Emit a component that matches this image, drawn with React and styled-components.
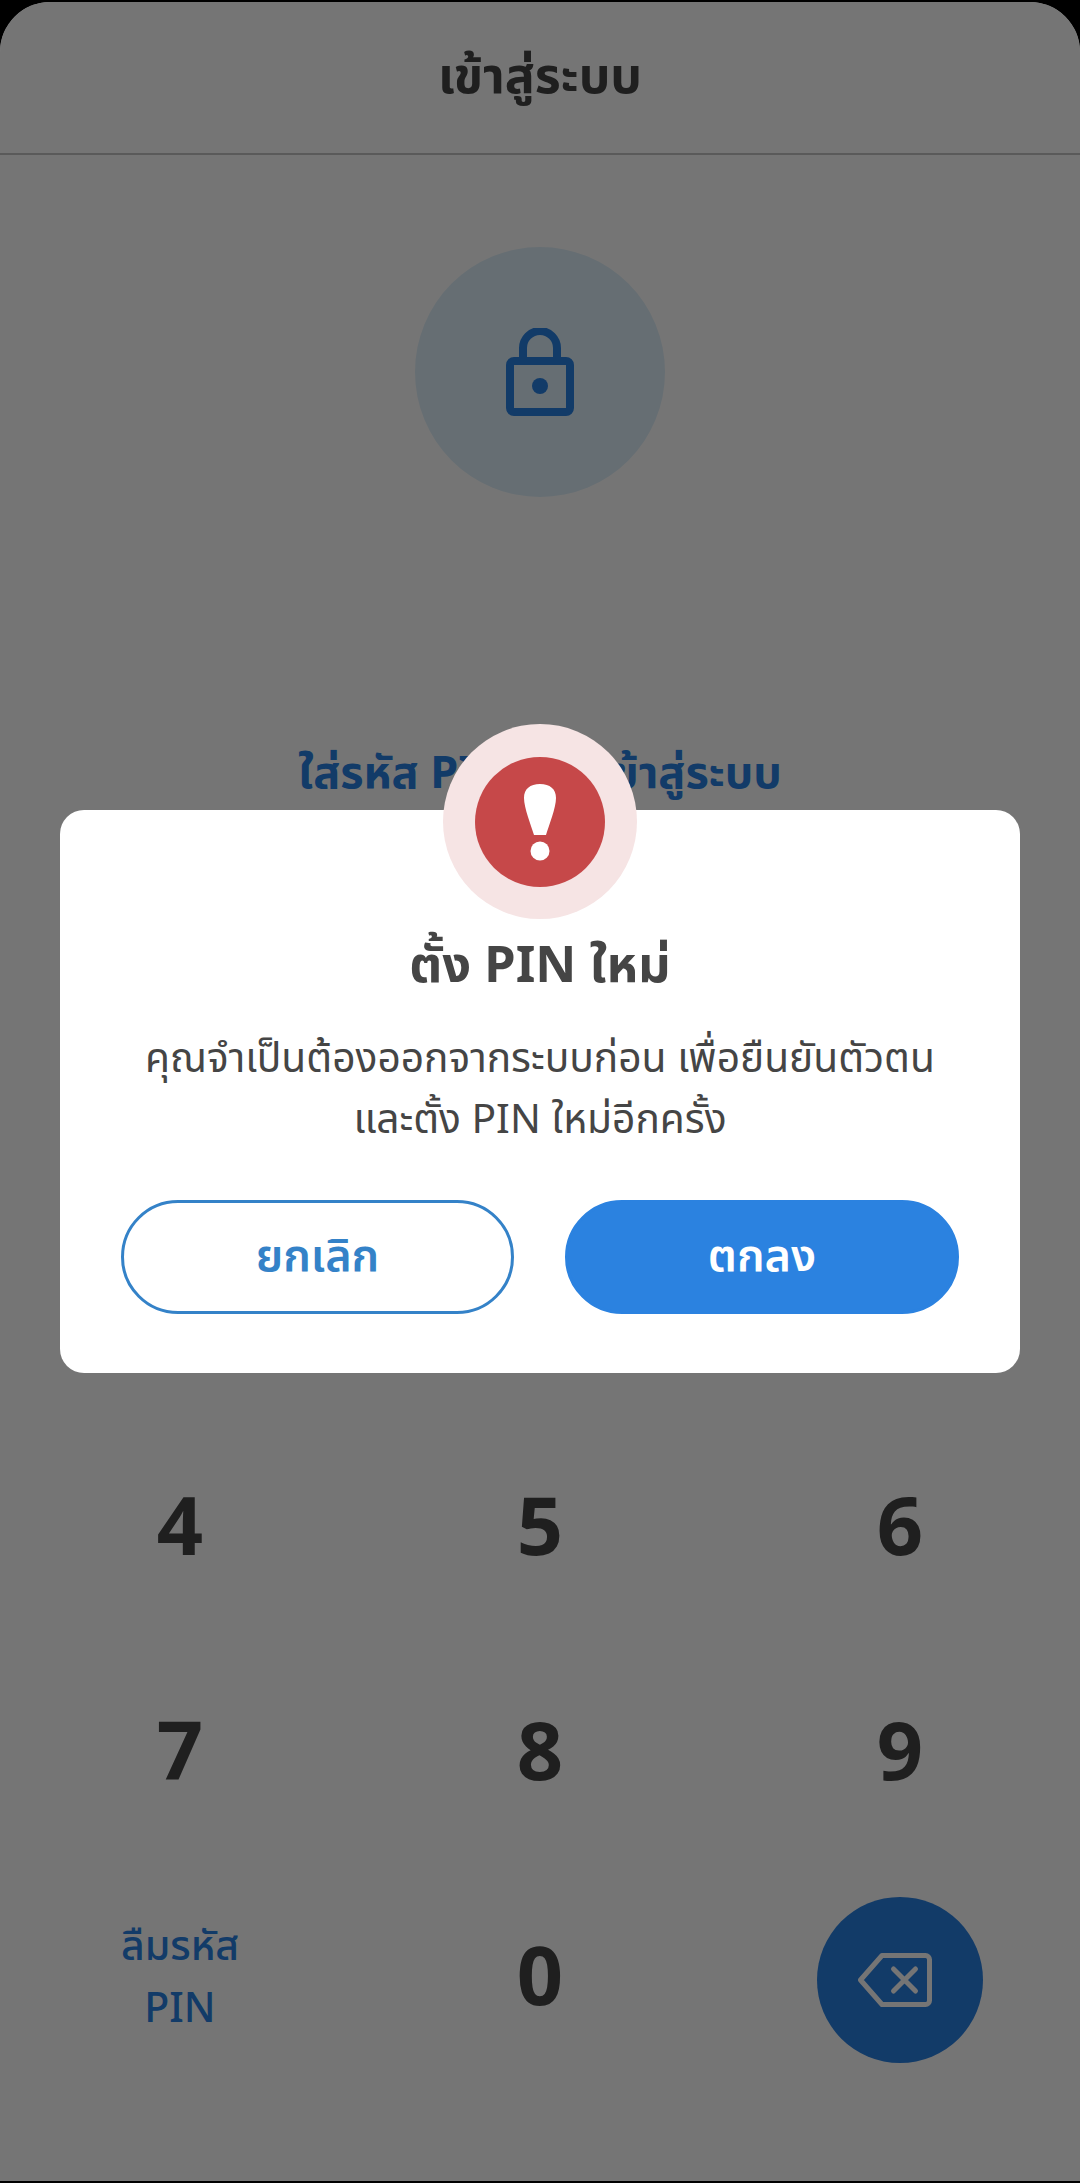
import React from 'react';
import styled, { createGlobalStyle } from 'styled-components';

const blue = '#2880e2';
const ink = '#454545';
const digits = ['1', '2', '3', '4', '5', '6', '7', '8', '9'];

export default function App() {
  return (
    <>
      <GlobalStyle />
      <Screen>
        <Header>เข้าสู่ระบบ</Header>
        <LockCircle>
          <svg width="68" height="88" viewBox="0 0 68 88" fill="none">
            <path d="M17 32V20a17 17 0 0 1 34 0v12" stroke={blue} strokeWidth="8" />
            <rect x="4" y="33" width="60" height="51" rx="4" stroke={blue} strokeWidth="8" />
            <circle cx="34" cy="58" r="8" fill={blue} />
          </svg>
        </LockCircle>
        <Prompt>ใส่รหัส PIN เพื่อเข้าสู่ระบบ</Prompt>
        <Keypad>
          {digits.map((digit) => (
            <Digit key={digit}>{digit}</Digit>
          ))}
          <ForgotLink>
            ลืมรหัส
            <br />
            PIN
          </ForgotLink>
          <Digit>0</Digit>
          <KeyCell>
            <BackspaceButton aria-label="ลบ">
              <svg width="74" height="54" viewBox="0 0 74 54" fill="none" stroke="#fff" strokeWidth="5" strokeLinecap="round" strokeLinejoin="round">
                <path d="M24 2.5h43.5a4 4 0 0 1 4 4v41a4 4 0 0 1-4 4H24L2.5 27z" />
                <path d="M35.5 16l22 22M57.500 16l-22 22" />
              </svg>
            </BackspaceButton>
          </KeyCell>
        </Keypad>

        <Overlay>
          <Dialog>
            <AlertBadge>
              <AlertDisc>
                <svg width="34" height="78" viewBox="0 0 34 78" fill="#fff">
                  <path d="M17 0c10 0 16 5 16 14 0 10-7 27-10 37H11C8 41 1 24 1 14 1 5 7 0 17 0z" />
                  <circle cx="17" cy="67" r="9.5" />
                </svg>
              </AlertDisc>
            </AlertBadge>
            <DialogTitle>ตั้ง PIN ใหม่</DialogTitle>
            <DialogText>
              คุณจำเป็นต้องออกจากระบบก่อน เพื่อยืนยันตัวตน
              <br />
              และตั้ง PIN ใหม่อีกครั้ง
            </DialogText>
            <DialogActions>
              <OutlineButton>ยกเลิก</OutlineButton>
              <SolidButton>ตกลง</SolidButton>
            </DialogActions>
          </Dialog>
        </Overlay>
      </Screen>
    </>
  );
}

const GlobalStyle = createGlobalStyle`
  html, body {
    margin: 0;
    background: #000;
  }

  body {
    font-family: "Noto Sans", "Noto Sans Thai", "Noto Sans Thai UI", "DejaVu Sans", sans-serif;
  }
`;

const Screen = styled.div`
  position: relative;
  display: flex;
  flex-direction: column;
  align-items: center;
  width: 1080px;
  height: 2179px;
  margin-top: 2px;
  overflow: hidden;
  background: #fff;
  border-radius: 50px 50px 0 0;
`;

const Header = styled.header`
  display: flex;
  align-items: center;
  justify-content: center;
  flex-shrink: 0;
  width: 100%;
  height: 151px;
  border-bottom: 2px solid #c4c4c4;
  color: ${ink};
  font-size: 50px;
  font-weight: 700;
`;

const LockCircle = styled.div`
  display: flex;
  align-items: center;
  justify-content: center;
  flex-shrink: 0;
  width: 250px;
  height: 250px;
  margin-top: 92px;
  border-radius: 50%;
  background: #dff0fa;
`;

const Prompt = styled.h1`
  margin: 234px 0 0;
  color: ${blue};
  font-size: 45px;
  font-weight: 700;
  line-height: 80px;
`;

const Keypad = styled.div`
  display: grid;
  grid-template-columns: repeat(3, 360px);
  grid-auto-rows: 225px;
  width: 1080px;
  margin-top: 375px;
`;

const KeyCell = styled.div`
  display: flex;
  align-items: center;
  justify-content: center;
`;

const Digit = styled(KeyCell)`
  color: ${ink};
  font-size: 81px;
  font-weight: 700;
`;

const ForgotLink = styled(KeyCell)`
  padding-top: 3px;
  color: ${blue};
  font-size: 41px;
  font-weight: 500;
  line-height: 62px;
  text-align: center;
`;

const BackspaceButton = styled.button`
  display: flex;
  align-items: center;
  justify-content: center;
  width: 166px;
  height: 166px;
  margin-top: 13px;
  padding: 0 10px 0 0;
  border: none;
  border-radius: 50%;
  background: ${blue};
`;

const Overlay = styled.div`
  position: absolute;
  inset: 0;
  display: flex;
  align-items: center;
  justify-content: center;
  background: rgba(0, 0, 0, 0.54);
`;

const Dialog = styled.section`
  position: relative;
  box-sizing: border-box;
  width: 960px;
  height: 563px;
  padding: 118px 61px 0;
  border-radius: 24px;
  background: #fff;
  text-align: center;
`;

const AlertBadge = styled.div`
  position: absolute;
  top: -86px;
  left: 383px;
  display: flex;
  align-items: center;
  justify-content: center;
  width: 194px;
  height: 195px;
  border-radius: 50%;
  background: #f6e4e4;
`;

const AlertDisc = styled.div`
  display: flex;
  align-items: center;
  justify-content: center;
  width: 130px;
  height: 130px;
  margin-top: 1px;
  padding-top: 2px;
  box-sizing: border-box;
  border-radius: 50%;
  background: #c64849;
`;

const DialogTitle = styled.h2`
  margin: 0;
  color: ${ink};
  font-size: 50.500px;
  font-weight: 700;
  line-height: 70px;
`;

const DialogText = styled.p`
  margin: 28px 0 0;
  color: ${ink};
  font-size: 40.700px;
  line-height: 61px;
  white-space: nowrap;
`;

const DialogActions = styled.div`
  display: grid;
  grid-template-columns: 393px 394px;
  justify-content: space-between;
  margin-top: 52px;
`;

const OutlineButton = styled.button`
  height: 114px;
  padding: 0;
  border: 3px solid #3482c8;
  border-radius: 57px;
  background: #fff;
  color: #3482c8;
  font-family: inherit;
  font-size: 45px;
  font-weight: 600;
`;

const SolidButton = styled(OutlineButton)`
  border-color: #2b82e0;
  background: #2b82e0;
  color: #fff;
`;
